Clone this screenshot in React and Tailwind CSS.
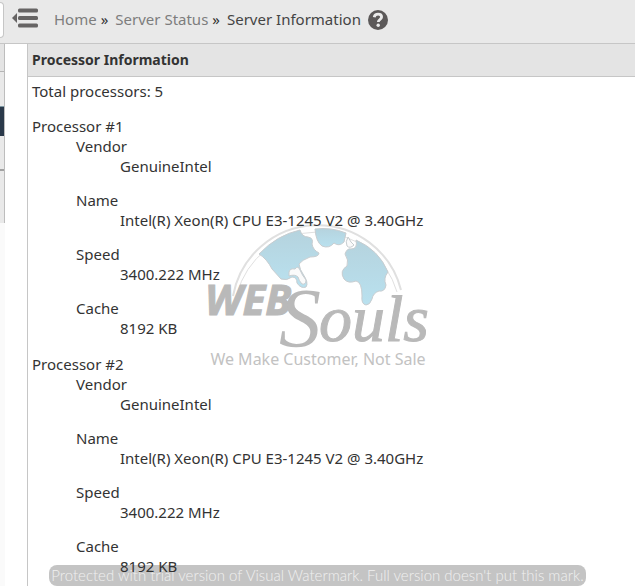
import React from 'react'

const fields = [
  { name: 'Vendor', value: 'GenuineIntel' },
  { name: 'Name', value: 'Intel(R) Xeon(R) CPU E3-1245 V2 @ 3.40GHz' },
  { name: 'Speed', value: '3400.222 MHz' },
  { name: 'Cache', value: '8192 KB' },
]

const processors = [
  { id: 1, fields },
  { id: 2, fields },
]

const MenuIcon = () => (
  <svg width="26" height="20" viewBox="0 0 26 20" fill="#666464" aria-hidden="true">
    <path d="M0 10l5-5v10z" />
    <rect x="6" y="0.5" width="20" height="4" rx="1.5" />
    <rect x="6" y="8" width="20" height="4" rx="1.5" />
    <rect x="6" y="15.5" width="20" height="4" rx="1.5" />
  </svg>
)

const HelpIcon = () => (
  <svg width="20" height="20" viewBox="0 0 20 20" aria-hidden="true">
    <circle cx="10" cy="10" r="10" fill="#5c5959" />
    <path
      d="M6.2 7.2C6.6 5 8.2 4.200 10.100 4.200c2 0 3.500 1.100 3.500 2.900 0 2.300-3.300 2.500-3.300 5"
      fill="none"
      stroke="#ebebeb"
      strokeWidth="2.8"
    />
    <circle cx="10.200" cy="15.200" r="1.700" fill="#ebebeb" />
  </svg>
)

const Header = () => (
  <header className="flex h-11 items-center border-b border-[#c6c6c6] bg-[#e9e9e9] pb-1">
    <div className="h-9 w-1 rounded-r border border-l-0 border-[#c6c6c6] bg-white"></div>
    <button type="button" aria-label="Toggle menu" className="mb-1 ml-2">
      <MenuIcon />
    </button>
    <nav aria-label="Breadcrumb" className="mb-0.5 ml-4 flex items-center">
      <a href="#home" className="text-[#7d7d7d]">
        Home
      </a>
      <span className="ml-1 text-[#333333]">»</span>
      <a href="#status" className="ml-[7px] text-[#7d7d7d]">
        Server Status
      </a>
      <span className="ml-1 text-[#333333]">»</span>
      <span className="ml-[7px] text-[#444444]">Server Information</span>
      <button type="button" aria-label="Help" className="mt-0.5 ml-[7px]">
        <HelpIcon />
      </button>
    </nav>
  </header>
)

const Sidebar = () => (
  <aside className="w-[5px] shrink-0 bg-[#fafafa]">
    <div className="border-r border-[#bdbdbd] bg-[#e9e9e9]">
      <div className="h-7 border-b border-[#b5b5b5] bg-[#e4e4e4]"></div>
      <div className="h-[34px]"></div>
      <div className="h-[30px] border-t border-[#7d98a3] bg-[#2a394a]"></div>
      <div className="h-[35px] border-b-2 border-[#a2a2a2]"></div>
      <div className="h-[52px]"></div>
    </div>
  </aside>
)

const Logo = () => (
  <svg
    width="224"
    height="150"
    viewBox="206 222 224 150"
    role="img"
    aria-label="WebSouls, We Make Customer, Not Sale"
  >
    <defs>
      <linearGradient id="land" x1="0" y1="0" x2="0" y2="1">
        <stop offset="0" stopColor="#b5d3de" />
        <stop offset="1" stopColor="#b9e1ef" />
      </linearGradient>
    </defs>
    <g fill="none" stroke="#e0e0e0">
      <path d="M233 296A86 86 0 0 1 401 290" strokeWidth="2" />
      <path d="M237 294A83 83 0 0 1 397 292" strokeWidth="1" />
    </g>
    <g fill="url(#land)" stroke="#c8cdd0" strokeWidth="1">
      <path d="M259 254Q277 235 300 230Q302 237 308 237Q314 238 312 244Q313 250 319 253Q319 257 310 257Q302 260 299 264Q300 270 303 274Q309 283 306 287Q301 289 297 283Q297 277 292 277Q287 281 281 279L272 269Q267 259 259 254Z" />
      <path d="M315 229Q331 227 346 233L344 242Q339 247 334 243Q329 249 322 246Q316 242 315 229Z" />
      <path d="M356 240Q379 250 388 272Q383 278 386 285Q385 292 379 291Q373 293 372 299Q370 305 366 305Q361 304 362 296Q362 282 356 281Q348 284 344 279Q339 271 347 266Q349 260 345 254Q347 248 351 249Q358 249 356 240Z" />
      <path d="M348 237Q351 243 354 245Q350 249 347 246Q345 242 348 237Z" fill="#fafafa" />
      <path d="M289 272Q290 268 295 269Q298 265 300 270Q302 275 306 280Q306 285 302 284Q299 281 298 277Q295 274 289 276Z" fill="#fafafa" />
    </g>
    <g fill="#b9b9b9">
      <text
        x="205"
        y="315"
        stroke="#b9b9b9"
        className="font-['Noto_Sans',sans-serif] text-[42px] font-bold italic"
      >
        WEB
      </text>
      <text x="279" y="347" className="font-['Liberation_Serif',serif] text-[84px] italic">
        S
      </text>
      <text
        x="319"
        y="341"
        stroke="#b9b9b9"
        className="font-['Liberation_Serif',serif] text-[66px] italic"
      >
        ouls
      </text>
      <text
        x="318"
        y="365"
        textAnchor="middle"
        fill="#c2c2c2"
        className="font-['Noto_Sans',sans-serif] text-base"
      >
        We Make Customer, Not Sale
      </text>
    </g>
  </svg>
)

const Processor = ({ processor }) => (
  <dl>
    <dt>Processor #{processor.id}</dt>
    <dd className="ml-11">
      <dl className="flex flex-col gap-3.5">
        {processor.fields.map((field) => (
          <div key={field.name}>
            <dt>{field.name}</dt>
            <dd className="ml-11">{field.value}</dd>
          </div>
        ))}
      </dl>
    </dd>
  </dl>
)

const App = () => {
  return (
    <div className="relative isolate flex min-h-screen flex-col bg-white font-['Noto_Sans',sans-serif] text-[15px] leading-5 text-[#333333]">
      <Header />
      <div className="flex flex-1">
        <Sidebar />
        <main className="ml-[22px] flex-1 border-l border-[#c6c6c6]">
          <h1 className="flex h-[33px] items-center border-b border-[#c6c6c6] bg-[#e4e4e4] px-1 text-sm font-bold">
            Processor Information
          </h1>
          <div className="px-1 pt-1">
            <p className="mb-[15px]">Total processors: 5</p>
            <div className="flex flex-col gap-4">
              {processors.map((processor) => (
                <Processor key={processor.id} processor={processor} />
              ))}
            </div>
          </div>
        </main>
      </div>
      <div className="absolute inset-x-0 top-[222px] -z-10 flex justify-center">
        <Logo />
      </div>
      <div className="absolute inset-x-0 bottom-0 -z-10 flex justify-center">
        <p className="rounded-lg bg-[#c4c4c4] px-0.5 font-['Lato',sans-serif] text-[15px] leading-[21px] font-light whitespace-nowrap text-[#f0f0f0]">
          Protected with trial version of Visual Watermark. Full version doesn't put this mark.
        </p>
      </div>
    </div>
  )
}

export default App
